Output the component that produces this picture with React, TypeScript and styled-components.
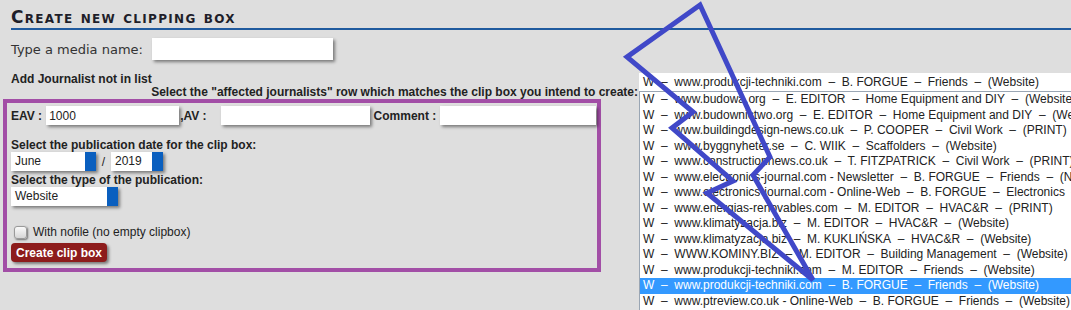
import React from "react";
import styled, { createGlobalStyle } from "styled-components";

const GlobalStyle = createGlobalStyle`
  html, body {
    margin: 0;
    padding: 0;
    background: #dedede;
    overflow: hidden;
  }
`;

const Page = styled.div`
  position: relative;
  width: 1071px;
  height: 310px;
  overflow: hidden;
  background: #dedede;
  color: #222;
  font-family: "Liberation Sans", Arial, sans-serif;
  font-size: 12px;
`;

const Title = styled.h1`
  margin: 0 0 0 11px;
  padding: 8px 0 1px;
  line-height: 19px;
  font-family: "DejaVu Sans", Verdana, sans-serif;
  font-size: 17px;
  letter-spacing: 1.3px;
  font-weight: bold;
  font-variant: small-caps;
  color: #1e1e2a;
  border-bottom: 2px solid #1f5a9e;
`;

const Main = styled.div`
  display: flex;
  align-items: flex-start;
`;

const LeftColumn = styled.div`
  width: 639px;
  flex: none;
  padding-top: 8px;
`;

const MediaRow = styled.div`
  display: flex;
  align-items: center;
  gap: 9px;
  height: 22px;
  padding-left: 11px;
  font-family: "DejaVu Sans", Verdana, sans-serif;
  font-size: 13px;
  color: #333;
`;

const TextInput = styled.input<{ $w: number; $h?: number }>`
  width: ${(p) => p.$w}px;
  height: ${(p) => p.$h ?? 19}px;
  box-sizing: border-box;
  border: none;
  padding: 0 3px;
  margin: 0;
  background: #fff;
  font-family: "Liberation Sans", Arial, sans-serif;
  font-size: 12px;
  color: #222;
  box-shadow: 2px 2px 3px rgba(0, 0, 0, 0.45);
  outline: none;
`;

const Label = styled.div<{ $top?: number }>`
  font-weight: bold;
  line-height: 14px;
  margin-top: ${(p) => p.$top ?? 0}px;
`;

const AddJournalist = styled(Label)`
  padding-left: 11px;
`;

const Instruction = styled.div`
  font-weight: bold;
  line-height: 13px;
  text-align: right;
  padding-right: 1px;
`;

const PurpleBox = styled.div`
  margin-left: 3px;
  width: 598px;
  height: 173px;
  box-sizing: border-box;
  border: 4px solid #a24ea6;
  padding: 3px 0 0 4px;
`;

const FieldRow = styled.div<{ $gap?: number }>`
  display: flex;
  align-items: center;
  height: 19px;
  gap: ${(p) => p.$gap ?? 0}px;
`;

const InlineLabel = styled.span<{ $l?: number; $r?: number }>`
  font-weight: bold;
  margin-left: ${(p) => p.$l ?? 0}px;
  margin-right: ${(p) => p.$r ?? 0}px;
  white-space: nowrap;
`;

const SelectBox = styled.div<{ $w: number }>`
  position: relative;
  width: ${(p) => p.$w}px;
  height: 19px;
  box-sizing: border-box;
  padding-left: 4px;
  line-height: 19px;
  background: #fff;
  box-shadow: 2px 2px 3px rgba(0, 0, 0, 0.45);
  &::after {
    content: "";
    position: absolute;
    top: 0;
    right: 0;
    width: 11px;
    height: 100%;
    background: #0a5fbf;
  }
`;

const Slash = styled.span`
  width: 15px;
  text-align: center;
`;

const CheckRow = styled.label`
  display: flex;
  align-items: center;
  gap: 6px;
  height: 14px;
  margin-top: 19px;
  padding-left: 3px;
`;

const CheckBox = styled.span`
  width: 13px;
  height: 13px;
  box-sizing: border-box;
  border: 1px solid #9a9a9a;
  border-radius: 3px;
  background: linear-gradient(#fafafa, #d6d6d6);
  box-shadow: 1px 1px 2px rgba(0, 0, 0, 0.5);
`;

const CreateButton = styled.button`
  display: block;
  margin-top: 4px;
  height: 19px;
  padding: 0 5px;
  border: none;
  border-radius: 4px;
  background: #8d1c1c;
  color: #fff;
  font-family: "Liberation Sans", Arial, sans-serif;
  font-size: 12px;
  font-weight: bold;
  box-shadow: 2px 2px 3px rgba(0, 0, 0, 0.45);
`;

const RightColumn = styled.div`
  width: 432px;
  flex: none;
  margin-top: 43px;
  overflow: hidden;
`;

const CurrentRow = styled.div`
  width: 470px;
  height: 18px;
  line-height: 18px;
  padding-left: 4px;
  background: #fff;
  white-space: nowrap;
`;

const ListBox = styled.div`
  width: 470px;
  height: 240px;
  border: 1px solid #9aa6b4;
  background: #fff;
`;

const Option = styled.div<{ $selected?: boolean }>`
  height: 15.5px;
  line-height: 15.5px;
  padding-left: 3px;
  white-space: nowrap;
  background: ${(p) => (p.$selected ? "#3399ff" : "transparent")};
  color: ${(p) => (p.$selected ? "#fff" : "#222")};
`;

const Bolt = styled.svg`
  position: absolute;
  left: 0;
  top: 0;
  pointer-events: none;
`;

const sep = "\u00a0 –\u00a0 ";
const row = (parts: string[]) => parts.join(sep);

const current = row(["W", "www.produkcji-techniki.com", "B. FORGUE", "Friends", "(Website)"]);

const journalists = [
  ["W", "www.budowa.org", "E. EDITOR", "Home Equipment and DIY", "(Website)"],
  ["W", "www.budownictwo.org", "E. EDITOR", "Home Equipment and DIY", "(Website)"],
  ["W", "www.buildingdesign-news.co.uk", "P. COOPER", "Civil Work", "(PRINT)"],
  ["W", "www.byggnyheter.se", "C. WIIK", "Scaffolders", "(Website)"],
  ["W", "www.constructionnews.co.uk", "T. FITZPATRICK", "Civil Work", "(PRINT)"],
  ["W", "www.electronics-journal.com - Newsletter", "B. FORGUE", "Friends", "(Newsletter)"],
  ["W", "www.electronics-journal.com - Online-Web", "B. FORGUE", "Electronics", "(Website)"],
  ["W", "www.energias-renovables.com", "M. EDITOR", "HVAC&R", "(PRINT)"],
  ["W", "www.klimatyzacja.biz", "M. EDITOR", "HVAC&R", "(Website)"],
  ["W", "www.klimatyzacja.biz", "M. KUKLIŃSKA", "HVAC&R", "(Website)"],
  ["W", "WWW.KOMINY.BIZ", "M. EDITOR", "Building Management", "(Website)"],
  ["W", "www.produkcji-techniki.com", "M. EDITOR", "Friends", "(Website)"],
  ["W", "www.produkcji-techniki.com", "B. FORGUE", "Friends", "(Website)"],
  ["W", "www.ptreview.co.uk - Online-Web", "B. FORGUE", "Friends", "(Website)"],
];
const SELECTED = 12;

// hand-drawn lightning arrow pointing at the selected row
const boltPoints = "700,5 627,57 693,112 672,128 733,181 707,193 813,280 753,175 770,157";

const App = () => {
  return (
    <Page>
      <GlobalStyle />
      <Title>Create new clipping box</Title>
      <Main>
        <LeftColumn>
          <MediaRow>
            <span>Type a media name:</span>
            <TextInput $w={181} $h={22} />
          </MediaRow>
          <AddJournalist $top={12}>Add Journalist not in list</AddJournalist>
          <Instruction>
            Select the "affected journalists" row which matches the clip box you intend to create:
          </Instruction>
          <PurpleBox>
            <FieldRow>
              <InlineLabel $r={4}>EAV :</InlineLabel>
              <TextInput $w={133} defaultValue="1000" />
              <InlineLabel $l={1} $r={14}>,AV :</InlineLabel>
              <TextInput $w={149} />
              <InlineLabel $l={4} $r={4}>Comment :</InlineLabel>
              <TextInput $w={156} />
            </FieldRow>
            <Label $top={13}>Select the publication date for the clip box:</Label>
            <FieldRow>
              <SelectBox $w={85}>June</SelectBox>
              <Slash>/</Slash>
              <SelectBox $w={52}>2019</SelectBox>
            </FieldRow>
            <Label $top={2}>Select the type of the publication:</Label>
            <FieldRow>
              <SelectBox $w={107}>Website</SelectBox>
            </FieldRow>
            <CheckRow>
              <CheckBox />
              <span>With nofile (no empty clipbox)</span>
            </CheckRow>
            <CreateButton>Create clip box</CreateButton>
          </PurpleBox>
        </LeftColumn>
        <RightColumn>
          <CurrentRow>{current}</CurrentRow>
          <ListBox>
            {journalists.map((j, i) => (
              <Option key={i} $selected={i === SELECTED}>
                {row(j)}
              </Option>
            ))}
          </ListBox>
        </RightColumn>
      </Main>
      <Bolt width={1071} height={310} viewBox="0 0 1071 310">
        <polygon
          points={boltPoints}
          fill="none"
          stroke="#4048c8"
          strokeWidth={5}
          strokeLinejoin="miter"
        />
      </Bolt>
    </Page>
  );
};

export default App;
